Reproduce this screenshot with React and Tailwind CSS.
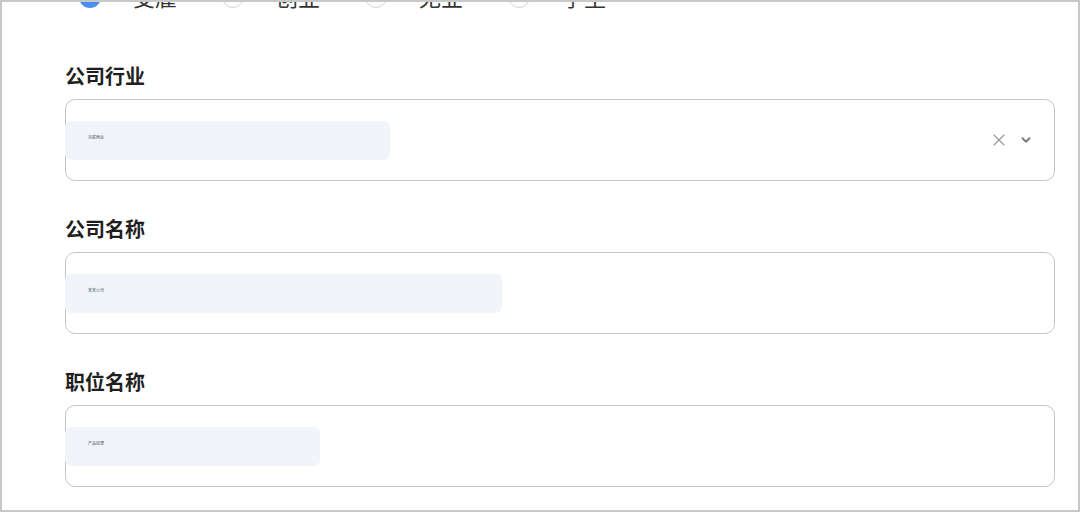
import { X, ChevronDown } from "lucide-react";

const statuses = [
    { label: "受雇", checked: true },
    { label: "创业", checked: false },
    { label: "无业", checked: false },
    { label: "学生", checked: false },
];

const fields = [
    { label: "公司行业", value: "互联网业", width: "w-[325px]", clearable: true },
    { label: "公司名称", value: "某某公司", width: "w-[437px]" },
    { label: "职位名称", value: "产品经理", width: "w-[255px]" },
];

const Radio = ({ checked }) =>
    checked ? (
        <span className="w-[22px] h-[22px] rounded-full bg-[#4a8ff5] flex items-center justify-center shrink-0">
            <svg width="12" height="12" viewBox="0 0 12 12" fill="none">
                <path d="M2.5 6.2l2.3 2.3 4.7-4.9" stroke="#fff" strokeWidth="1.8" strokeLinecap="round" strokeLinejoin="round" />
            </svg>
        </span>
    ) : (
        <span className="w-[22px] h-[22px] rounded-full border border-[#d6d6d6] bg-white shrink-0" />
    );

const Field = ({ label, value, width, clearable }) => (
    <div className="flex flex-col">
        <div className="h-[22px] flex items-center text-[20px] font-bold text-[#1f1f1f] leading-none">{label}</div>
        <div className="mt-[11px] h-[82px] rounded-[10px] border-[1.5px] border-[#c4c4c4] flex items-center pr-[21px]">
            <div className={`${width} h-[39px] -ml-[1px] rounded-[6px] bg-[#f1f4f8] flex items-center pl-[23px] pb-[4px]`}>
                <span className="text-[4px] leading-none text-[#4b5563]">{value}</span>
            </div>
            {clearable && (
                <div className="ml-auto flex items-center gap-[10px]">
                    <X size={20} strokeWidth={1.4} className="text-[#9a9a9a]" />
                    <ChevronDown size={14} strokeWidth={3.2} className="text-[#7a7a7a]" />
                </div>
            )}
        </div>
    </div>
);

export default function App() {
    return (
        <div
            className="w-[1080px] h-[512px] overflow-hidden bg-white border-2 border-[#c8c8c8]"
            style={{ fontFamily: '"Noto Sans", "Noto Sans CJK SC", sans-serif' }}
        >
            <div className="pl-[63px] pr-[23px]">
                {/* employment status radios, scrolled partly out of view */}
                <div className="h-[28px] -mt-[19px] flex items-center pl-[14px]">
                    {statuses.map((s) => (
                        <label key={s.label} className="flex items-center w-[143px]">
                            <Radio checked={s.checked} />
                            <span className="ml-[32px] text-[22px] text-[#333] leading-none">{s.label}</span>
                        </label>
                    ))}
                </div>

                <div className="mt-[55px] flex flex-col gap-[38px]">
                    {fields.map((f) => (
                        <Field key={f.label} {...f} />
                    ))}
                </div>
            </div>
        </div>
    );
}
